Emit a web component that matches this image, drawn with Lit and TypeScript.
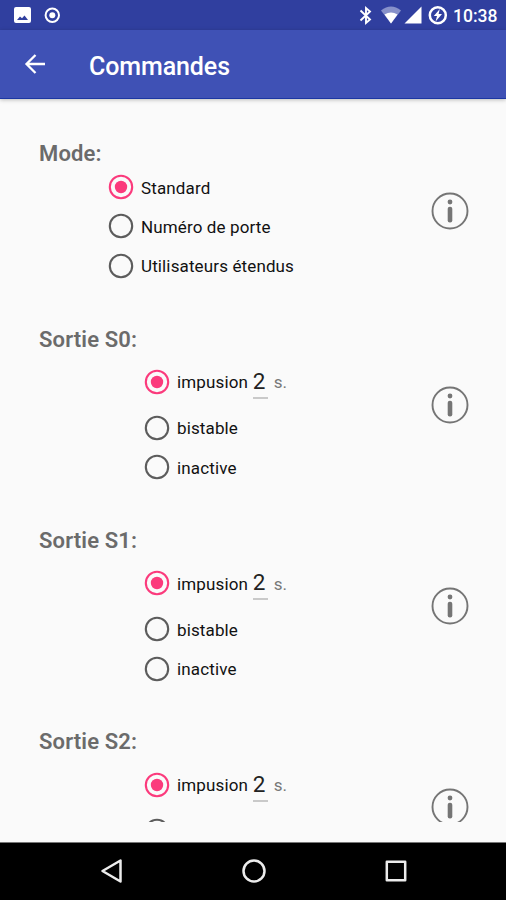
import { LitElement, html, css, svg } from "lit";
import { customElement, property } from "lit/decorators.js";

@customElement("radio-option")
class RadioOption extends LitElement {
  @property({ type: Boolean }) checked = false;
  @property() label = "";
  @property() seconds = "";

  static styles = css`
    :host { display: flex; align-items: center; height: 39.4px; }
    :host([timed]) { height: 52.6px; }
    svg { width: 26px; height: 26px; flex: none; margin-right: 7px; fill: none; stroke: #5c5c5c; stroke-width: 2.1; }
    .on { stroke: #fb3a7c; }
    .dot { fill: #fb3a7c; stroke: none; }
    .label { font-size: 17px; letter-spacing: 0.13px; color: #111; white-space: nowrap; line-height: 24px; padding-top: 1px; }
    .field { width: 15px; height: 31px; margin-left: 4.7px; margin-top: 3px; box-sizing: border-box; border-bottom: 2px solid #c9c9c9; font-size: 22.5px; line-height: 27px; color: #222; }
    .unit { font-size: 17px; line-height: 24px; margin-left: 6px; color: #777; padding-top: 1px; }
  `;

  render() {
    return html`
      <svg class=${this.checked ? "on" : ""} viewBox="0 0 26 26">
        <circle cx="13" cy="13" r="11.2" />
        ${this.checked ? svg`<circle class="dot" cx="13" cy="13" r="6.2" />` : ""}
      </svg>
      <span class="label">${this.label}</span>
      ${this.seconds
        ? html`<span class="field">${this.seconds}</span><span class="unit">s.</span>`
        : ""}
    `;
  }
}

@customElement("app-root")
class AppRoot extends LitElement {
  static styles = css`
    :host { display: flex; flex-direction: column; width: 506px; height: 900px; overflow: hidden; background: #fafafa; font-family: Roboto, sans-serif; }
    .status { height: 30px; flex: none; background: #303f9f; display: flex; align-items: center; color: #fff; }
    .status svg { display: block; height: 30px; }
    .status .left { width: 80px; }
    .status .right { width: 100px; margin-left: auto; }
    .time { width: 53px; font-size: 17.5px; font-weight: 500; line-height: 30px; padding-top: 2px; }
    .bar { height: 69px; box-sizing: border-box; flex: none; background: #3f51b5; border-bottom: 1px solid #1c37a3; display: flex; align-items: center; color: #fff; box-shadow: 0 1px 4px rgba(0, 0, 0, 0.25); }
    .bar svg { width: 24px; height: 24px; margin-left: 23px; margin-right: 42px; }
    .bar h1 { margin: 4px 0 0; font-size: 25px; font-weight: 500; letter-spacing: -0.1px; }
    main { flex: 1; min-height: 0; padding: 42px 37px 20px 39px; box-sizing: border-box; display: flex; }
    .scroll { flex: 1; overflow: hidden; }
    section { height: 201.4px; }
    section.mode { height: 185.6px; }
    h2 { margin: 0; height: 29px; line-height: 26px; font-size: 22px; font-weight: 600; letter-spacing: 0.15px; color: #6b6b6b; }
    .mode h2 { height: 26.4px; }
    .row { display: flex; justify-content: space-between; }
    .options { padding-left: 105px; }
    .mode .options { padding-left: 69px; }
    .info { width: 38px; height: 38px; margin-top: 30px; flex: none; }
    .mode .info { margin-top: 25px; }
    .nav { height: 58px; box-sizing: border-box; border-top: 1px solid #777; flex: none; background: #000; display: flex; align-items: center; justify-content: space-between; padding: 0 97px 2px 98px; }
    .nav svg { width: 26px; height: 26px; fill: none; stroke: #ececec; stroke-width: 2.5; stroke-linejoin: round; }
  `;

  infoIcon() {
    return html`<svg class="info" viewBox="0 0 38 38">
      <circle cx="19" cy="19" r="17.5" fill="none" stroke="#757575" stroke-width="1.9" />
      <circle cx="19" cy="10" r="2.4" fill="#757575" />
      <rect x="16.7" y="14.7" width="4.6" height="15.8" rx="2.1" fill="#757575" />
    </svg>`;
  }

  output(name: string) {
    return html`<section>
      <h2>${name}</h2>
      <div class="row">
        <div class="options">
          <radio-option timed checked label="impusion" seconds="2"></radio-option>
          <radio-option label="bistable"></radio-option>
          <radio-option label="inactive"></radio-option>
        </div>
        ${this.infoIcon()}
      </div>
    </section>`;
  }

  render() {
    return html`
      <div class="status">
        <svg class="left" viewBox="0 0 80 30">
          <path fill="#fff" fill-rule="evenodd" d="M16 7H29Q31 7 31 9V21Q31 23 29 23H16Q14 23 14 21V9Q14 7 16 7ZM17 20H28L24.5 15.5L22 18.3L20 16.5Z" />
          <circle cx="52.3" cy="15.3" r="6.7" fill="none" stroke="#fff" stroke-width="2" />
          <circle cx="52.3" cy="15.3" r="3" fill="#fff" />
        </svg>
        <svg class="right" viewBox="353 0 100 30">
          <path d="M360.5 10.5L370 19.5L366 23V8L370 11.5L360.5 20.5" fill="none" stroke="#fff" stroke-width="1.9" />
          <path d="M381 10.5Q391 2.5 401 10.5L391 23.5Z" fill="#8791ca" />
          <path d="M384.5 14.5Q391 10.3 397.5 14.5L391 23.5Z" fill="#fff" />
          <path d="M421.5 6.5V23.5H404.5Z" fill="#fff" />
          <circle cx="437.8" cy="15.3" r="8" fill="none" stroke="#fff" stroke-width="2.5" />
          <path d="M439.8 9L433.8 16H437L435.6 21.5L442 14H438.6Z" fill="#fff" />
        </svg>
        <span class="time">10:38</span>
      </div>
      <div class="bar">
        <svg viewBox="0 0 24 24"><path d="M22 12H4M12.5 3L3.5 12L12.5 21" fill="none" stroke="#fff" stroke-width="2.3" /></svg>
        <h1>Commandes</h1>
      </div>
      <main>
        <div class="scroll">
          <section class="mode">
            <h2>Mode:</h2>
            <div class="row">
              <div class="options">
                <radio-option checked label="Standard"></radio-option>
                <radio-option label="Numéro de porte"></radio-option>
                <radio-option label="Utilisateurs étendus"></radio-option>
              </div>
              ${this.infoIcon()}
            </div>
          </section>
          ${["Sortie S0:", "Sortie S1:", "Sortie S2:"].map((n) => this.output(n))}
        </div>
      </main>
      <div class="nav">
        <svg viewBox="0 0 26 26"><path d="M22.5 2.5V23.5L4.5 13Z" /></svg>
        <svg viewBox="0 0 26 26"><circle cx="13" cy="13" r="10.5" /></svg>
        <svg viewBox="0 0 26 26"><rect x="3.8" y="3.8" width="18.4" height="18.4" /></svg>
      </div>
    `;
  }
}
